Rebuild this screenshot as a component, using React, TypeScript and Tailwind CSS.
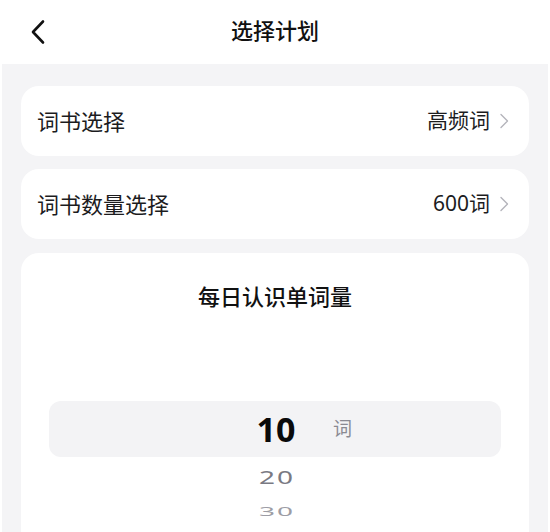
import React from "react";

function Chevron() {
  return (
    <svg width="10" height="16" viewBox="0 0 10 16" fill="none" className="ml-[9px]">
      <path d="M2 1.5 L8.5 8 L2 14.5" stroke="#b4b4bb" strokeWidth="1.4" strokeLinecap="round" strokeLinejoin="round" />
    </svg>
  );
}

function Row({ label, value }: { label: string; value: string }) {
  return (
    <div className="h-[70px] rounded-[18px] bg-white pl-4 pr-5 flex items-center justify-between">
      <span className="text-[22px] text-[#1c1c1e]">{label}</span>
      <div className="flex items-center">
        <span className="text-[21px] text-[#1c1c1e]">{value}</span>
        <Chevron />
      </div>
    </div>
  );
}

export default function App() {
  return (
    <div
      className="w-[550px] h-[532px] overflow-hidden bg-white flex flex-col"
      style={{ fontFamily: '"Noto Sans", "Noto Sans CJK SC", sans-serif' }}
    >
      <header className="h-16 shrink-0 grid grid-cols-[1fr_auto_1fr] items-center">
        <div className="pl-[30px] flex items-center">
          <svg width="16" height="26" viewBox="0 0 16 26" fill="none">
            <path d="M13 2.5 L3 13 L13 23.5" stroke="#111" strokeWidth="2.6" strokeLinecap="round" strokeLinejoin="round" />
          </svg>
        </div>
        <h1 className="text-[22px] font-medium text-[#111] pb-[4px]">选择计划</h1>
        <div />
      </header>
      <main className="flex-1 mx-[2px] bg-[#f4f4f6] px-[19px] pt-[22px] flex flex-col gap-[13px]">
        <Row label="词书选择" value="高频词" />
        <Row label="词书数量选择" value="600词" />
        <section className="mt-[1px] flex-1 min-h-[300px] rounded-[18px] bg-white px-7 pt-[27px] flex flex-col items-center">
          <h2 className="text-[22px] font-medium text-[#111] leading-[32px]">每日认识单词量</h2>
          <div className="mt-[89px] w-full h-[56px] rounded-xl bg-[#f3f3f5] relative flex items-center justify-center">
            <span className="text-[34px] font-bold text-[#0a0a0a] leading-none pl-[2px]">10</span>
            <span className="absolute left-[284px] top-1/2 -translate-y-1/2 text-[19px] text-[#8a8a92]">词</span>
          </div>
          <div className="mt-[6px] h-[28px] flex items-center justify-center">
            <span className="text-[28px] tracking-[2px] text-[#7a7a83] leading-none scale-y-[0.62] pl-[4px]">20</span>
          </div>
          <div className="mt-[8px] h-[24px] flex items-center justify-center">
            <span className="text-[28px] tracking-[2px] text-[#9d9da5] leading-none scale-y-[0.45] pl-[4px]">30</span>
          </div>
        </section>
      </main>
    </div>
  );
}
